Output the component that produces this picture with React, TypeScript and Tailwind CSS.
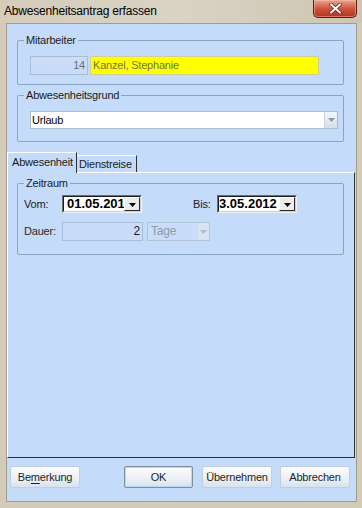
import React from "react";

function DropArrow({ color = "#000" }: { color?: string }) {
  return (
    <svg width="7" height="4" viewBox="0 0 7 4">
      <polygon points="0,0 7,0 3.5,4" fill={color} />
    </svg>
  );
}

function DatePicker({ value, textPad }: { value: string; textPad: string }) {
  return (
    <div className="w-[80px] shrink-0 h-[18px] flex border border-t-[#6e6e6e] border-l-[#6e6e6e] border-r-[#f0f0f0] border-b-[#f0f0f0]">
      <div className="flex-1 min-w-0 flex border border-t-[#1e1e1e] border-l-[#1e1e1e] border-r-[#cfcfcf] border-b-[#cfcfcf] bg-white">
        <div className={"flex-1 min-w-0 overflow-hidden whitespace-nowrap text-[13px] leading-[14px] font-bold tracking-[0px] text-black " + textPad}>
          {value}
        </div>
        <div className="w-[16px] shrink-0 h-full flex items-end justify-center pb-[3px] bg-[#ececec] border border-t-white border-l-white border-r-[#2a2a2a] border-b-[#2a2a2a]">
          <DropArrow />
        </div>
      </div>
    </div>
  );
}

function Btn({ children, w, extra = "" }: { children: React.ReactNode; w: string; extra?: string }) {
  return (
    <div
      className={
        "h-[22px] flex items-center justify-center rounded-[2px] border bg-gradient-to-b from-[#fbfcfd] via-[#eef2f7] to-[#d9e2ed] text-[11px] text-[#1e1e1e] " +
        w +
        " " +
        extra
      }
    >
      {children}
    </div>
  );
}

export default function App() {
  return (
    <div className="w-[362px] h-[508px] bg-[#d3cab8] flex flex-col font-['Liberation_Sans',Arial,sans-serif] text-[11px] tracking-[-0.2px] text-[#1b1b1b] overflow-hidden">
      {/* Title bar */}
      <div className="h-[23px] flex items-start bg-gradient-to-r from-[#d5ccba] via-[#dad3c4] to-[#cec5b2]">
        <div className="pl-[4px] pt-[4px] text-[12px] leading-[14px] text-black">Abwesenheitsantrag erfassen</div>
        <div className="ml-auto mr-[5px] w-[44px] h-[18px] flex items-center justify-center rounded-b-[5px] border border-t-0 border-[#5a1e14] bg-gradient-to-b from-[#e9a692] via-[#d0533b] to-[#b3321f] shadow-[inset_0_0_0_1px_rgba(255,200,180,0.45)]">
          <svg width="13" height="11" viewBox="0 0 13 11">
            <path d="M2 1.5 L11 9.5 M11 1.5 L2 9.5" stroke="#5a1e14" strokeWidth="3.6" strokeLinecap="round" />
            <path d="M2 1.5 L11 9.5 M11 1.5 L2 9.5" stroke="#ffffff" strokeWidth="2.2" strokeLinecap="round" />
          </svg>
        </div>
      </div>

      {/* Client area */}
      <div className="flex-1 ml-[6px] mr-[5px] mb-[6px] border border-[#a29c90] bg-[#c4dbf9] flex flex-col">
        {/* Mitarbeiter */}
        <fieldset className="mt-[10px] ml-[10px] mr-[12px] border border-[#8aa4c4] rounded-[2px] pt-[9px] pb-[9px] min-w-0">
          <legend className="ml-[6px] px-[2px] leading-[13px]">Mitarbeiter</legend>
          <div className="flex pl-[12px] gap-[2px]">
            <div className="w-[58px] h-[19px] border border-[#a8bcd5] bg-[#c9ddf8] text-right pr-[2px] leading-[17px] text-[#5f6f80]">14</div>
            <div className="w-[229px] h-[19px] border border-[#cfcf9a] bg-[#ffff00] pl-[2px] leading-[17px] text-[#727250]">Kanzel, Stephanie</div>
          </div>
        </fieldset>

        {/* Abwesenheitsgrund */}
        <fieldset className="mt-[4px] ml-[10px] mr-[12px] border border-[#8aa4c4] rounded-[2px] pt-[9px] pb-[12px] min-w-0">
          <legend className="ml-[6px] px-[2px] leading-[13px]">Abwesenheitsgrund</legend>
          <div className="pl-[12px]">
            <div className="w-[308px] h-[18px] bg-white border border-[#aabbd0] flex items-center">
              <div className="pl-[1px] leading-[16px] text-black">Urlaub</div>
              <div className="ml-auto mr-[0px] w-[13px] h-[16px] flex items-center justify-center border-l border-[#c9d3df] bg-gradient-to-b from-[#f3f6f9] to-[#d6dee8]">
                <DropArrow color="#8a97a6" />
              </div>
            </div>
          </div>
        </fieldset>

        {/* Tabs */}
        <div className="mt-[10px] h-[20px] flex items-end">
          <div className="relative z-10 w-[70px] h-[21px] -mb-[1px] bg-[#c4dbf9] border-t border-l border-t-white border-l-white border-r border-r-[#2f2f2f] pl-[4px] pt-[3px] leading-[13px]">
            Abwesenheit
          </div>
          <div className="w-[60px] h-[17px] bg-[#c4dbf9] border-t border-t-white border-r border-r-[#2f2f2f] pl-[2px] pt-[2px] leading-[13px]">
            Dienstreise
          </div>
        </div>
        <div className="h-[286px] mr-[1px] border-t border-l border-t-white border-l-white border-r border-b border-r-[#2f2f2f] border-b-[#2f2f2f] flex flex-col">
          <fieldset className="mt-[4px] ml-[9px] mr-[10px] border border-[#8aa4c4] rounded-[2px] pt-[5px] pb-[13px] min-w-0">
            <legend className="ml-[6px] px-[2px] leading-[13px]">Zeitraum</legend>
            <div className="flex items-center pl-[6px] h-[18px]">
              <div className="w-[38px] shrink-0">Vom:</div>
              <DatePicker value="01.05.2012" textPad="pl-[3px]" />
              <div className="ml-[51px] w-[24px] shrink-0">Bis:</div>
              <DatePicker value="3.05.2012" textPad="pl-0" />
            </div>
            <div className="mt-[9px] flex items-center pl-[6px] h-[19px]">
              <div className="w-[38px] shrink-0 text-[#2a2a2a]">Dauer:</div>
              <div className="w-[81px] h-[19px] border border-[#a9bdd6] bg-[#c9ddf8] text-right pr-[2px] text-[12px] leading-[17px] text-[#1e1e1e]">2</div>
              <div className="ml-[4px] w-[63px] h-[19px] border border-[#b3c4d8] bg-[#c9ddf8] flex items-center">
                <div className="pl-[3px] text-[12px] leading-[17px] text-[#8d9aa9]">Tage</div>
                <div className="ml-auto w-[11px] h-[17px] flex items-center justify-center bg-[#d9e4f1]">
                  <DropArrow color="#b0bccb" />
                </div>
              </div>
            </div>
          </fieldset>
        </div>

        {/* Buttons */}
        <div className="mt-[8px] flex pl-[3px]">
          <Btn w="w-[70px]" extra="border-[#c2cedd]">
            <span>
              Be<span className="underline underline-offset-[2px]">m</span>erkung
            </span>
          </Btn>
          <Btn w="w-[69px] ml-[44px]" extra="border-[#7e8fa3] shadow-[inset_0_0_0_1px_#bcd6f1]">
            OK
          </Btn>
          <Btn w="w-[70px] ml-[9px]" extra="border-[#c2cedd]">
            Übernehmen
          </Btn>
          <Btn w="w-[70px] ml-[8px]" extra="border-[#c2cedd]">
            Abbrechen
          </Btn>
        </div>
      </div>
    </div>
  );
}
